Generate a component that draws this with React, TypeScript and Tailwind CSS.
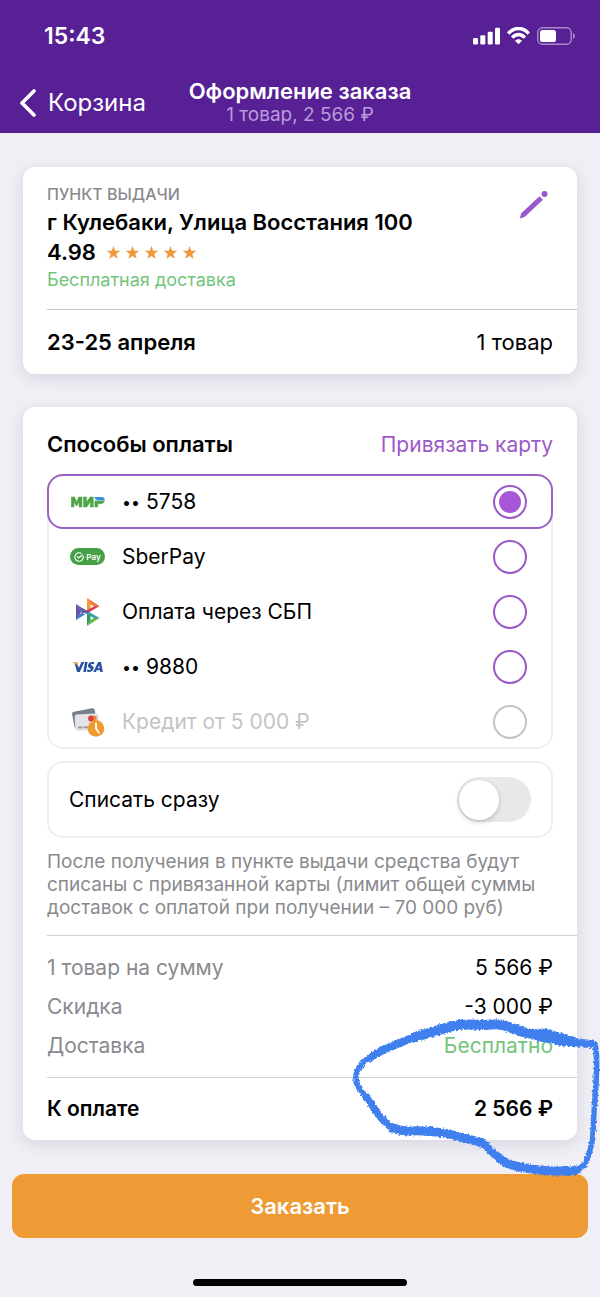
import { useState, type ReactNode } from "react";

function StatusIcons() {
    return (
        <div className="flex items-center gap-[7px] text-white">
            <svg width="27" height="18" viewBox="0 0 27 18" fill="currentColor">
                <rect x="0" y="11" width="5" height="6.5" rx="1.2" />
                <rect x="7.3" y="8.3" width="5" height="9.2" rx="1.2" />
                <rect x="14.7" y="4.7" width="5" height="12.8" rx="1.2" />
                <rect x="22" y="0.8" width="5" height="16.7" rx="1.2" />
            </svg>
            <svg width="23" height="18" viewBox="0 0 23 18" fill="none" stroke="currentColor" strokeWidth="3.4">
                <path d="M1.2 6.6C7-.3 16-.3 21.8 6.6" />
                <path d="M5.2 10.7c3.7-4.2 8.9-4.2 12.6 0" />
                <path d="M8 13.7c2.1-2 4.9-2 7 0l-3.5 3.6z" fill="currentColor" stroke="none" />
            </svg>
            <svg width="39" height="18" viewBox="0 0 39 18">
                <rect x="0.8" y="0.8" width="33.4" height="16.4" rx="4.6" fill="none" stroke="#a98bcb" strokeWidth="1.4" />
                <rect x="3" y="3" width="16" height="12" rx="2.6" fill="currentColor" />
                <path d="M36 6c2.6.9 2.6 5.1 0 6z" fill="#a98bcb" />
            </svg>
        </div>
    );
}

function MirLogo() {
    return (
        <svg width="34" height="12" viewBox="0 0 34 12">
            <g fill="#4fa548" stroke="#4fa548" strokeWidth="0.5">
                <path d="M.3 11V1h3.3l2 5 2-5H11v10H8V5.500L6.2 9.500H4.8L3 5.500V11z" />
                <path d="M12.500 11V1h3v5.300L19 1h3.300v10h-3V5.700L15.800 11z" />
                <path d="M23.800 5h9.700c-.6 1.700-2 2.700-3.800 2.700h-2.900V11h-3z" />
            </g>
            <path d="M23.500 1h7.200c2.100 0 3.400 1.500 3 3.500h-6.200c-2 0-3.500-1.500-4-3.500z" fill="#3b8fd6" />
        </svg>
    );
}

function SberPayLogo() {
    return (
        <span className="flex h-[17px] w-[35px] items-center justify-center gap-[2px] rounded-full bg-[#46a046] text-[8px] font-semibold text-white">
            <svg width="10" height="10" viewBox="0 0 10 10" fill="none" stroke="currentColor" strokeWidth="1.1">
                <path d="M9.200 4.200A4.200 4.200 0 1 1 7.500 1.600" />
                <path d="M2.800 4.400 4.800 5.800 9 2.700" />
            </svg>
            Pay
        </span>
    );
}

function SbpLogo() {
    return (
        <svg width="24" height="28" viewBox="0 0 24 28">
            <path d="M0 6v16l5-8z" fill="#5b4fa0" />
            <path d="M0 6l11 7-4 2.500L3.200 13z" fill="#8a55a8" />
            <path d="M0 22V6l3.200 5v6z" fill="#6656a5" />
            <path d="M0 22l9-5.500-3-2-2.800 2.300z" fill="#3f80c4" />
            <path d="M11 0v12l3.500-1.200V6.200z" fill="#f29b38" />
            <path d="M11 0l12.500 8-5 .8-4-2.600z" fill="#ee7a35" />
            <path d="M23.500 8 11 15.500V12l7.500-3.800z" fill="#d93a50" />
            <path d="M11 28V16l3.500 1v5z" fill="#2f9a55" />
            <path d="M11 28l12.500-8h-5.300L14.500 22z" fill="#62b847" />
            <path d="M6 10l17.500 10h-5.800L11 16.300 4.500 12z" fill="#38a0a8" />
            <path d="M6 10l7 4-2.500 1.800L4.500 12z" fill="#5b62b0" />
        </svg>
    );
}

function VisaLogo() {
    return (
        <svg width="31" height="12" viewBox="0 0 31 12">
            <g fill="#28519e">
                <path d="M2.500 1.500 5 1l1.800 6L9.500 1H12.300L7.800 11H5z" />
                <path d="M13 1h2.600l-1.700 10h-2.600z" />
                <path d="M22.300 1.300 21.900 3.300c-1.500-.6-3-.5-3.100.2-.1.900 3.200 1.200 2.800 3.900-.4 3-3.700 4.100-6.800 3.200l.4-2.100c1.600.7 3.500.6 3.600-.3.100-1-3.200-1.100-2.800-3.900.4-2.800 3.400-3.900 6.300-3z" />
                <path d="M21.300 11 26.100 1h2.900l1.800 10h-2.600l-.2-1.700h-3.200L24 11zm4.400-3.700h2l-.4-3z" />
            </g>
            <path d="M0 1h4.200c1 0 1.300.6 1.500 1.400l.8 3.400C5.200 3.400 3 2 0 1.300z" fill="#eeb440" />
        </svg>
    );
}

function CreditLogo() {
    return (
        <svg width="34" height="30" viewBox="0 0 34 30">
            <rect x="2" y="3" width="23" height="17" rx="2.2" fill="#77808c" transform="rotate(-11 13 11)" />
            <rect x="4" y="7" width="24" height="16.5" rx="2.2" fill="#e4e4e8" transform="rotate(-3 16 15)" />
            <circle cx="23" cy="11.3" r="2.9" fill="#ee8a3c" />
            <circle cx="20" cy="11.5" r="2.9" fill="#d8433f" />
            <path d="M7 20.500h4.500M12.500 20.200H17" stroke="#9b9ba3" strokeWidth="2" />
            <circle cx="25" cy="21.5" r="8.3" fill="#f19a32" />
            <path d="M25 16.500v5.200l3 4" fill="none" stroke="#fff" strokeWidth="1.8" strokeLinecap="round" />
        </svg>
    );
}

function Marker() {
    return (
        <svg
            className="pointer-events-none absolute -right-[23px] -bottom-10"
            width="250"
            height="165"
            viewBox="0 0 250 165"
            fill="none"
            stroke="#3f7fee"
            strokeLinecap="round"
            strokeLinejoin="round"
        >
            <filter id="rough" x="-5%" y="-5%" width="110%" height="110%">
                <feTurbulence type="fractalNoise" baseFrequency="0.45" numOctaves="2" seed="4" />
                <feDisplacementMap in="SourceGraphic" scale="4" xChannelSelector="R" yChannelSelector="G" />
            </filter>
            <g filter="url(#rough)">
                <path
                    strokeWidth="5.5"
                    d="M27 38C14 44 5 54 6 64S12 77 15 80 24 92 30 100 38 112 43 113 62 116 73 116 93 117 103 120 124 125 132 128 142 138 150 143 160 150 170 152 192 156 207 156 221 157 227 155 236 149 238 142 243 128 243 118 245 85 246 68 247 43 246 35 244 28 237 28"
                />
                <path strokeWidth="8" d="M20 43C31 34 39 33 50 28S68 21 77 18 93 12 103 11" />
                <path strokeWidth="10" d="M65 22 103 11C115 8 125 10 133 10S147 8 153 10 166 15 173 17 190 20 197 21 213 26 221 26" />
                <path strokeWidth="13" d="M188 20C200 20 207 24 214 25" />
                <path strokeWidth="8" d="M214 26 240 29" />
                <path strokeWidth="7" d="M16 82C24 92 32 108 43 113" />
                <path strokeWidth="9" d="M43 113C55 118 62 115 73 116S93 117 103 120 124 125 132 128" />
                <path strokeWidth="8" d="M132 128C140 134 142 138 150 143" />
                <path strokeWidth="9" d="M150 144C158 149 160 150 170 152S192 156 207 156 221 157 227 155" />
            </g>
        </svg>
    );
}

type Method = {
    id: string;
    icon: ReactNode;
    label: string;
    masked?: boolean;
    disabled?: boolean;
};

const methods: Method[] = [
    { id: "mir", icon: <MirLogo />, label: "5758", masked: true },
    { id: "sberpay", icon: <SberPayLogo />, label: "SberPay" },
    { id: "sbp", icon: <SbpLogo />, label: "Оплата через СБП" },
    { id: "visa", icon: <VisaLogo />, label: "9880", masked: true },
    { id: "credit", icon: <CreditLogo />, label: "Кредит от 5 000 ₽", disabled: true }
];

const totals = [
    { label: "1 товар на сумму", value: "5 566 ₽", color: "text-black" },
    { label: "Скидка", value: "-3 000 ₽", color: "text-black" },
    { label: "Доставка", value: "Бесплатно", color: "text-[#74c47a]" }
];

function Header() {
    return (
        <header className="bg-[#582095] text-white">
            <div className="flex h-[72px] items-center justify-between pl-11 pr-6">
                <span className="text-[23px] font-semibold">15:43</span>
                <StatusIcons />
            </div>
            <div className="grid h-[61px] grid-cols-[1fr_auto_1fr] items-center px-5">
                <button className="flex items-center gap-[11px] text-2xl">
                    <svg width="17" height="28" viewBox="0 0 17 28" fill="none" stroke="currentColor" strokeWidth="3.6" strokeLinecap="round" strokeLinejoin="round">
                        <path d="M14 2 2 14l12 12" />
                    </svg>
                    Корзина
                </button>
                <div className="text-center">
                    <h1 className="text-[22px] leading-6 font-semibold">Оформление заказа</h1>
                    <p className="text-[19px] leading-6 text-[#b89bdb]">1 товар, 2 566 ₽</p>
                </div>
            </div>
        </header>
    );
}

function PickupCard() {
    return (
        <section className="rounded-xl bg-white pl-6 shadow-[0_4px_16px_rgba(60,60,90,0.14)]">
            <div className="flex items-start justify-between border-b border-[#c6c6c8] pt-4 pr-6 pb-[14px]">
                <div>
                    <p className="text-base leading-[22px] font-medium text-[#8a8a8e]">ПУНКТ ВЫДАЧИ</p>
                    <h2 className="text-[22px] leading-[34px] font-semibold">г Кулебаки, Улица Восстания 100</h2>
                    <div className="flex items-center gap-2.5 leading-[26px]">
                        <span className="text-[22px] font-semibold">4.98</span>
                        <span className="flex gap-1">
                            {[1, 2, 3, 4, 5].map((n) => (
                                <svg key={n} width="15" height="15" viewBox="0 0 24 24" fill="#ec9a3c">
                                    <path d="M12 1.500l2.700 7.600 8.100.2-6.400 4.900 2.300 7.700-6.700-4.500-6.700 4.500 2.300-7.700L1.200 9.300l8.100-.2z" />
                                </svg>
                            ))}
                        </span>
                    </div>
                    <p className="text-lg leading-[30px] text-[#74c47a]">Бесплатная доставка</p>
                </div>
                <button aria-label="Изменить" className="mt-1.5">
                    <svg width="34" height="30" viewBox="0 0 34 30" fill="#9b59d0">
                        <path d="M1 28.200 2.300 24.300 20.400 7.200 24 10.800 5.900 27.700 2 29.200C1.200 29.400.8 29 1 28.200z" />
                        <circle cx="25.5" cy="5" r="3" />
                    </svg>
                </button>
            </div>
            <div className="flex h-16 items-center justify-between pr-6 text-[22px]">
                <span className="font-semibold">23-25 апреля</span>
                <span>1 товар</span>
            </div>
        </section>
    );
}

function PaymentCard() {
    const [selected, setSelected] = useState("mir");
    const [chargeNow, setChargeNow] = useState(false);

    return (
        <section className="relative rounded-xl bg-white pl-6 shadow-[0_4px_16px_rgba(60,60,90,0.14)]">
            <div className="pr-6">
                <div className="flex h-[67px] items-center justify-between pt-2">
                    <h2 className="text-[22px] font-semibold">Способы оплаты</h2>
                    <a href="#card" className="text-[21px] text-[#9b59c8]">Привязать карту</a>
                </div>

                <div className="rounded-2xl border-2 border-[#efeff0]">
                    <ul className="-m-0.5">
                        {methods.map((m) => (
                            <li key={m.id}>
                                <label
                                    className={`flex h-[55px] items-center rounded-2xl border-2 pr-6 pl-5 text-[21px] ${
                                        selected === m.id ? "border-[#9b62c4]" : "border-transparent"
                                    } ${m.disabled ? "text-[#c4c4c6]" : "text-black"}`}
                                >
                                    <span className="mr-4 flex w-[37px] justify-center">{m.icon}</span>
                                    {m.masked && <span className="mr-1.5 text-base">••</span>}
                                    <span className="flex-1">{m.label}</span>
                                    <input
                                        type="radio"
                                        name="payment"
                                        checked={selected === m.id}
                                        disabled={m.disabled}
                                        onChange={() => setSelected(m.id)}
                                        className="size-[34px] appearance-none rounded-full border-2 border-[#9b59c8] bg-clip-content p-1 checked:bg-[#a557d8] disabled:border-[#c4c4c6]"
                                    />
                                </label>
                            </li>
                        ))}
                    </ul>
                </div>

                <label className="mt-3 flex h-[77px] items-center justify-between rounded-2xl border-2 border-[#efeff0] px-5 text-[21px]">
                    Списать сразу
                    <input
                        type="checkbox"
                        role="switch"
                        checked={chargeNow}
                        onChange={(e) => setChargeNow(e.target.checked)}
                        className="flex h-[45px] w-[74px] appearance-none items-center rounded-full bg-[#e8e8ea] px-0.5 before:size-10 before:rounded-full before:bg-white before:shadow-[0_2px_5px_rgba(0,0,0,0.2)] checked:justify-end checked:bg-[#a557d8]"
                    />
                </label>

                <p className="mt-3 text-[19px] leading-[23px] text-[#8a8a8e]">
                    После получения в пункте выдачи средства будут списаны с привязанной карты (лимит общей суммы доставок с оплатой при получении – 70 000 руб)
                </p>
            </div>

            <dl className="mt-4 border-y border-[#d0d0d2] py-3 pr-6">
                {totals.map((row) => (
                    <div key={row.label} className="flex h-[39px] items-center justify-between text-[21px]">
                        <dt className="text-[#8a8a8e]">{row.label}</dt>
                        <dd className={row.color}>{row.value}</dd>
                    </div>
                ))}
            </dl>
            <div className="flex h-[62px] items-center justify-between pr-6 text-[21px] font-semibold">
                <span>К оплате</span>
                <span>2 566 ₽</span>
            </div>
            <Marker />
        </section>
    );
}

export default function App() {
    return (
        <div className="min-h-screen bg-[#f0eff5] font-['Inter','Liberation_Sans',sans-serif] text-black">
            <Header />
            <main className="flex flex-col gap-[33px] px-[23px] pt-[34px]">
                <PickupCard />
                <PaymentCard />
            </main>
            <footer className="px-3 pt-[34px] pb-[11px]">
                <button className="h-16 w-full rounded-xl bg-[#ee9a35] text-[22px] font-semibold text-white">Заказать</button>
                <div className="mx-auto mt-[41px] h-[7px] w-[214px] rounded-full bg-black" />
            </footer>
        </div>
    );
}
